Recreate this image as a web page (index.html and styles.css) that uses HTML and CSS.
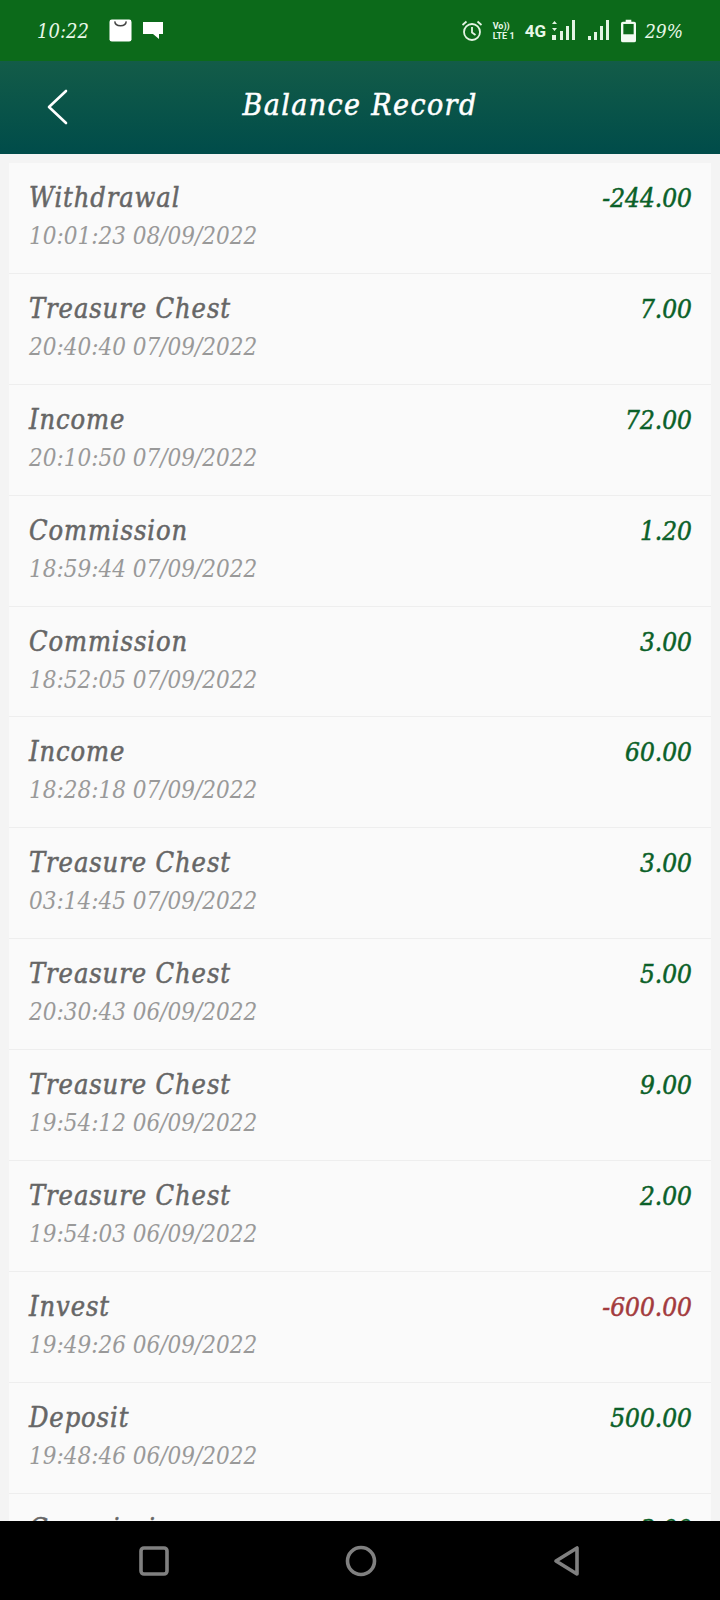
FILE: index.html
```html
<!DOCTYPE html>
<html lang="en">
<head>
<meta charset="utf-8">
<title>Balance Record</title>
<link rel="stylesheet" href="styles.css">
</head>
<body>
<div class="phone">
  <div class="status">
    <span class="time">10:22</span>
    <svg class="ic-bag" viewBox="0 0 24 24"><rect x="0.5" y="0.5" width="23" height="23" rx="2.5" fill="#fff"/><path d="M6 2.500c.5 6 11.500 6 12 0" fill="none" stroke="#444" stroke-width="1.500"/></svg>
    <svg class="ic-msg" viewBox="0 0 20 19"><path d="M0 1h20v12h-4v5l-6-5H0z" fill="#fff"/></svg>
    <span class="status-gap"></span>
    <svg class="ic-alarm" viewBox="0 0 22 22" fill="none" stroke="#e4f5e4" stroke-width="1.800"><circle cx="11" cy="12" r="8"/><path d="M11 7v5.500l3.500 2.500M1.500 5L5.500 1.500M20.500 5L16.500 1.500"/></svg>
    <span class="volte"><span>Vo))</span><span>LTE 1</span></span>
    <span class="net">4G</span>
    <svg class="ic-sig1" viewBox="0 0 24 22" fill="#e4f5e4"><path d="M0 4l2.500-3 2.500 3zM0 8l2.500 3 2.500-3zM0 15h4v5H0zM8 11h3v9H8zM14 6h3v14h-3zM20 0h3v20h-3z"/></svg>
    <svg class="ic-sig2" viewBox="0 0 22 22" fill="#e4f5e4"><path d="M0 16h3v4H0zM6 12h3v8H6zM12 6h3v14h-3zM18 0h3v20h-3z"/></svg>
    <svg class="ic-batt" viewBox="0 0 16 24"><path d="M5 0h6v2h3a2 2 0 0 1 2 2v18a2 2 0 0 1-2 2H2a2 2 0 0 1-2-2V4a2 2 0 0 1 2-2h3z" fill="#f2fbf2"/><rect x="2.500" y="4.500" width="11" height="11" fill="#0c6a1a"/></svg>
    <span class="pct">29%</span>
  </div>
  <header class="bar">
    <svg class="back" viewBox="0 0 22 36" fill="none" stroke="#fff" stroke-width="2.600" stroke-linecap="round" stroke-linejoin="round"><path d="M20 2L3 18l17 16"/></svg>
    <h1 class="title">Balance Record</h1>
  </header>
  <main class="list">
    <div class="row"><div class="info"><div class="name">Withdrawal</div><div class="when">10:01:23 08/09/2022</div></div><div class="amt">-244.00</div></div>
    <div class="row"><div class="info"><div class="name">Treasure Chest</div><div class="when">20:40:40 07/09/2022</div></div><div class="amt">7.00</div></div>
    <div class="row"><div class="info"><div class="name">Income</div><div class="when">20:10:50 07/09/2022</div></div><div class="amt">72.00</div></div>
    <div class="row"><div class="info"><div class="name">Commission</div><div class="when">18:59:44 07/09/2022</div></div><div class="amt">1.20</div></div>
    <div class="row"><div class="info"><div class="name">Commission</div><div class="when">18:52:05 07/09/2022</div></div><div class="amt">3.00</div></div>
    <div class="row"><div class="info"><div class="name">Income</div><div class="when">18:28:18 07/09/2022</div></div><div class="amt">60.00</div></div>
    <div class="row"><div class="info"><div class="name">Treasure Chest</div><div class="when">03:14:45 07/09/2022</div></div><div class="amt">3.00</div></div>
    <div class="row"><div class="info"><div class="name">Treasure Chest</div><div class="when">20:30:43 06/09/2022</div></div><div class="amt">5.00</div></div>
    <div class="row"><div class="info"><div class="name">Treasure Chest</div><div class="when">19:54:12 06/09/2022</div></div><div class="amt">9.00</div></div>
    <div class="row"><div class="info"><div class="name">Treasure Chest</div><div class="when">19:54:03 06/09/2022</div></div><div class="amt">2.00</div></div>
    <div class="row"><div class="info"><div class="name">Invest</div><div class="when">19:49:26 06/09/2022</div></div><div class="amt neg">-600.00</div></div>
    <div class="row"><div class="info"><div class="name">Deposit</div><div class="when">19:48:46 06/09/2022</div></div><div class="amt">500.00</div></div>
    <div class="row"><div class="info"><div class="name">Commission</div></div><div class="amt">3.00</div></div>
  </main>
  <nav class="nav">
    <svg class="nav-ic" viewBox="0 0 32 32" fill="none" stroke="#808080" stroke-width="3.600" stroke-linejoin="round"><rect x="3" y="3" width="26" height="26" rx="3"/></svg>
    <svg class="nav-ic" viewBox="0 0 32 32" fill="none" stroke="#808080" stroke-width="3.600"><circle cx="16" cy="16" r="13.500"/></svg>
    <svg class="nav-ic" viewBox="0 0 32 32" fill="none" stroke="#808080" stroke-width="3.600" stroke-linejoin="round"><path d="M26 3v26L5 16z"/></svg>
  </nav>
</div>
</body>
</html>
```
FILE: styles.css
```css
* { box-sizing: border-box; }
html, body { margin: 0; padding: 0; }
body { font-family: "DejaVu Serif Condensed", "DejaVu Serif", serif; font-style: italic; background: #f4f4f4; }
.phone { width: 720px; height: 1600px; overflow: hidden; position: relative; display: flex; flex-direction: column; background: #f4f4f4; }
.status { height: 61px; flex: none; background: #0c6a1a; display: flex; align-items: center; padding: 0 0 0 37px; color: #e8f8e8; }
.time { font-size: 20px; width: 72px; }
.ic-bag { width: 23px; height: 23px; margin-right: 11px; }
.ic-msg { width: 20px; height: 19px; }
.status-gap { flex: 1; }
.ic-alarm { width: 22px; height: 22px; margin-right: 10px; }
.volte { font: 700 9px/10px "Roboto", sans-serif; display: flex; flex-direction: column; margin-right: 6px; width: 26px; white-space: nowrap; }
.net { font: 700 17px "Roboto", sans-serif; margin-right: 6px; }
.ic-sig1 { width: 24px; height: 22px; margin-right: 12px; }
.ic-sig2 { width: 22px; height: 22px; margin-right: 11px; }
.ic-batt { width: 15px; height: 24px; margin-right: 9px; }
.pct { font-size: 19px; width: 38px; margin-right: 37px; white-space: nowrap; }
.bar { height: 93px; flex: none; background: linear-gradient(#135c48, #004c4a); display: flex; align-items: center; justify-content: center; position: relative; }
.back { position: absolute; left: 46px; top: 28px; width: 22px; height: 36px; }
.title { margin: 0 0 6px 0; font-size: 30px; font-weight: 400; font-style: italic; letter-spacing: 1.4px; color: #fff; -webkit-text-stroke: 0.5px #fff; }
.list { flex: 1; padding: 9px 9px 0; overflow: hidden; min-height: 0; }
.row { height: 110.9px; background: #fafafa; border-bottom: 1px solid #eeeeee; padding: 18px 19px 0 20px; display: flex; justify-content: space-between; align-items: flex-start; }
.name { font-size: 27px; line-height: 34px; letter-spacing: 0.9px; color: #666; font-weight: 400; -webkit-text-stroke: 0.5px #666; }
.when { font-size: 24px; line-height: 30px; margin-top: 6px; color: #999; }
.amt { font-size: 26px; line-height: 34px; color: #0a6028; font-weight: 400; -webkit-text-stroke: 0.5px #0a6028; }
.amt.neg { color: #a33a3d; -webkit-text-stroke-color: #a33a3d; }
.nav { height: 79px; flex: none; background: #000; display: flex; justify-content: space-between; align-items: center; padding: 0 137px 0 138px; }
.nav-ic { width: 32px; height: 32px; }
```
